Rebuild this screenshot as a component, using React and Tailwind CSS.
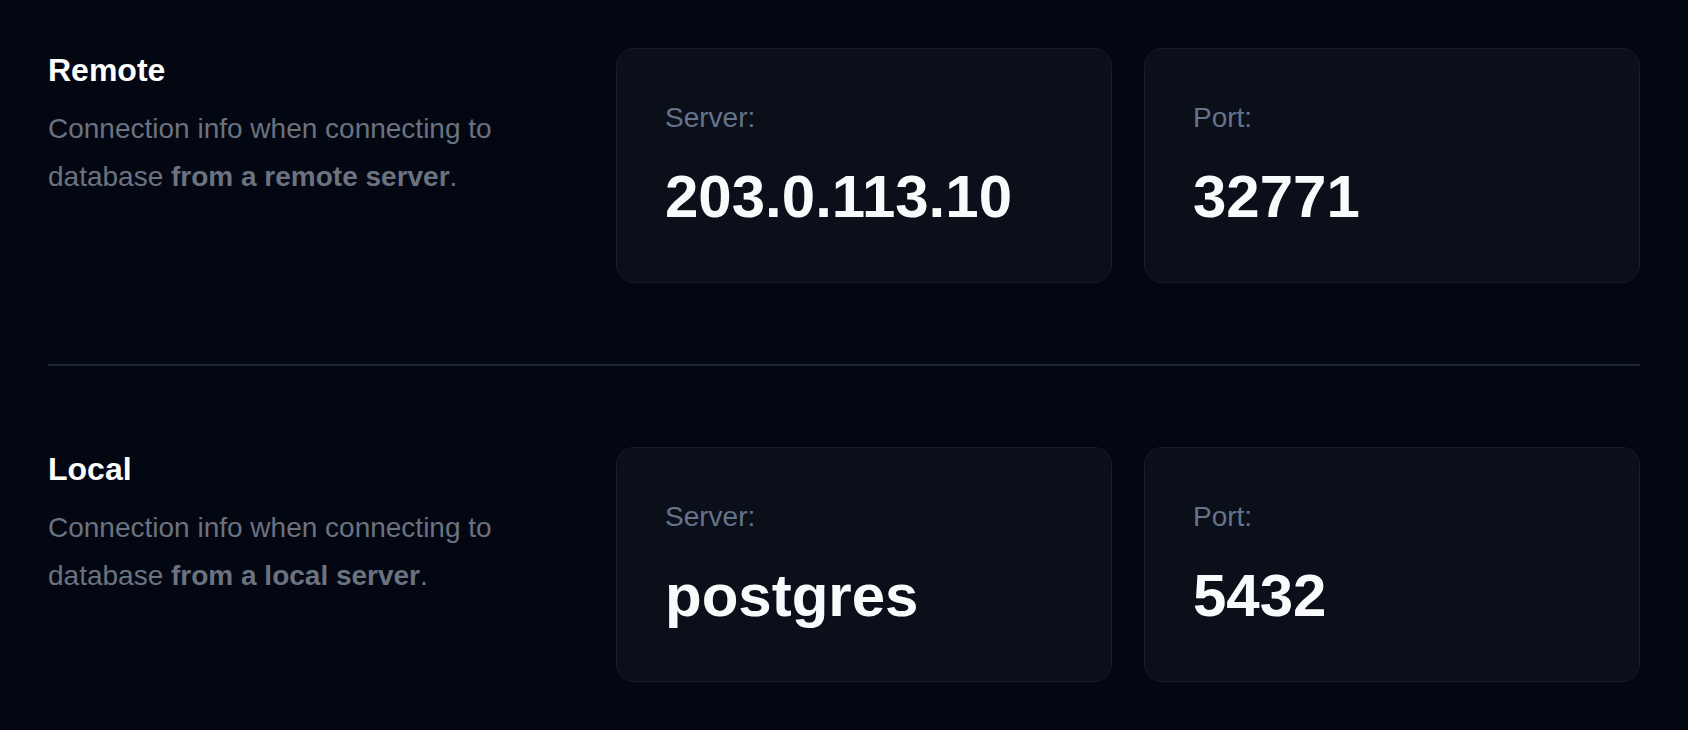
import React from 'react';

const sections = [
  { title: 'Remote', where: 'from a remote server', server: '203.0.113.10', port: '32771' },
  { title: 'Local', where: 'from a local server', server: 'postgres', port: '5432' },
];

function InfoCard({ label, value }) {
  return (
    <div className="flex-1 rounded-[18px] border border-[#161c2a] bg-[#0b0f1a] p-12">
      <div className="text-[28px] leading-[42px] text-[#64748b]">{label}</div>
      <div className="mt-5 text-[60px] font-bold leading-[75px] text-[#f9fafb]">{value}</div>
    </div>
  );
}

export default function App() {
  return (
    <div className="min-h-screen bg-[#030712] px-12 py-12 font-['Liberation_Sans',Arial,sans-serif]">
      {sections.map((s, i) => (
        <React.Fragment key={s.title}>
          {i > 0 && <div className="my-[81px] h-[2px] bg-[#1e2636]" />}
          <div className="flex gap-8">
            <div className="w-[536px] shrink-0">
              <h2 className="text-[32px] font-bold leading-[44px] text-white">{s.title}</h2>
              <p className="mt-[13px] text-[28px] leading-[48px] text-[#6b7280]">
                Connection info when connecting to database <span className="font-bold">{s.where}</span>.
              </p>
            </div>
            <div className="flex flex-1 gap-8">
              <InfoCard label="Server:" value={s.server} />
              <InfoCard label="Port:" value={s.port} />
            </div>
          </div>
        </React.Fragment>
      ))}
    </div>
  );
}
